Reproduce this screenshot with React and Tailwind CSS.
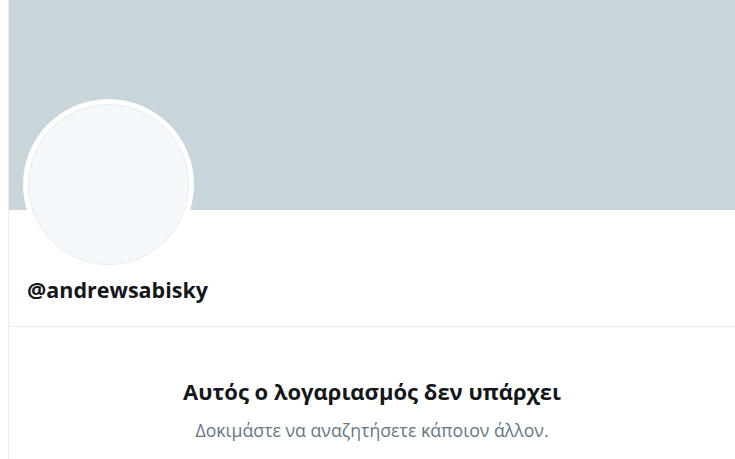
export default function App() {
  return (
    <div className="w-[735px] h-[459px] overflow-hidden bg-white" style={{ fontFamily: '"Open Sans", "Noto Sans", sans-serif' }}>
      <div className="ml-[8px] h-full border-l border-[#e6ecf0] flex flex-col">
        <div className="h-[210px] bg-[#c8d6dc] shrink-0" />
        <div className="relative h-[117px] border-b border-[#e6ecf0] shrink-0">
          <div className="absolute left-[14px] top-[-111px] w-[171px] h-[171px] rounded-full bg-white p-[5px]">
            <div className="w-full h-full rounded-full bg-[#f5f8fa] border border-[#e6ecf0]" />
          </div>
          <div className="pt-[66px] pl-[18px] text-[21.5px] leading-[28px] font-bold text-[#14171a]">@andrewsabisky</div>
        </div>
        <div className="flex flex-col items-center pt-[49px]">
          <div className="text-[22px] leading-[30px] font-bold text-[#14171a]">Αυτός ο λογαριασμός δεν υπάρχει</div>
          <div className="mt-[12px] text-[17.7px] leading-[24px] text-[#657786]">Δοκιμάστε να αναζητήσετε κάποιον άλλον.</div>
        </div>
      </div>
    </div>
  );
}
